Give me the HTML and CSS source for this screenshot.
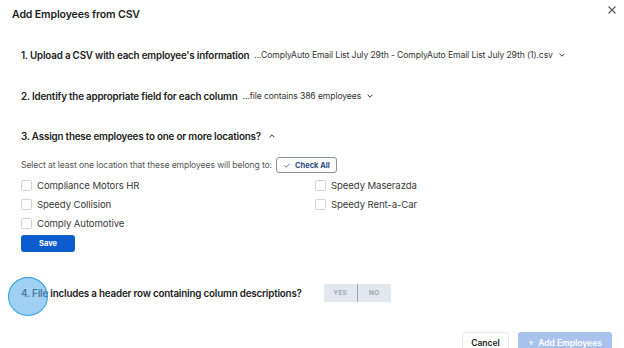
FILE: index.html
```html
<!DOCTYPE html>
<html lang="en">
<head>
<meta charset="utf-8">
<title>Add Employees from CSV</title>
<link rel="stylesheet" href="styles.css">
</head>
<body>
<div class="modal">
  <header class="modal-head">
    <h1 class="modal-title">Add Employees from CSV</h1>
    <button class="close" aria-label="Close">
      <svg width="8" height="8" viewBox="0 0 8 8"><path d="M0.5 0.5L7.5 7.5M7.5 0.5L0.5 7.5" stroke="#555" stroke-width="1.1" fill="none"/></svg>
    </button>
  </header>

  <div class="steps">
    <div class="step step-1">
      <span class="step-title">1. Upload a CSV with each employee's information</span>
      <span class="step-meta">...ComplyAuto Email List July 29th - ComplyAuto Email List July 29th (1).csv</span>
      <svg class="chev" width="6" height="4" viewBox="0 0 6 4"><path d="M0.6 0.8L3 3.2L5.4 0.8" stroke="#333" stroke-width="1" fill="none"/></svg>
    </div>

    <div class="step step-2">
      <span class="step-title">2. Identify the appropriate field for each column</span>
      <span class="step-meta">...file contains 386 employees</span>
      <svg class="chev" width="6" height="4" viewBox="0 0 6 4"><path d="M0.6 0.8L3 3.2L5.4 0.8" stroke="#333" stroke-width="1" fill="none"/></svg>
    </div>

    <section class="step-open">
      <div class="step step-3">
        <span class="step-title">3. Assign these employees to one or more locations?</span>
        <svg class="chev chev-up" width="6" height="4" viewBox="0 0 6 4"><path d="M0.6 3.2L3 0.8L5.4 3.2" stroke="#333" stroke-width="1" fill="none"/></svg>
      </div>
      <div class="select-row">
        <span class="select-label">Select at least one location that these employees will belong to:</span>
        <button class="check-all">
          <svg width="6" height="5" viewBox="0 0 6 5"><path d="M0.5 2.6L2.2 4.2L5.5 0.8" stroke="#2c4a7a" stroke-width="0.8" fill="none"/></svg>
          <span>Check All</span>
        </button>
      </div>
      <div class="locations">
        <label class="loc"><span class="box"></span>Compliance Motors HR</label>
        <label class="loc"><span class="box"></span>Speedy Maserazda</label>
        <label class="loc"><span class="box"></span>Speedy Collision</label>
        <label class="loc"><span class="box"></span>Speedy Rent-a-Car</label>
        <label class="loc"><span class="box"></span>Comply Automotive</label>
      </div>
      <button class="save">Save</button>
    </section>

    <div class="step step-4">
      <span class="step-title">4. File includes a header row containing column descriptions?</span>
      <div class="yesno">
        <button class="yn">YES</button>
        <button class="yn">NO</button>
      </div>
      <span class="spot"></span>
    </div>
  </div>

  <footer class="modal-foot">
    <button class="cancel">Cancel</button>
    <button class="add">+&nbsp;&nbsp;Add Employees</button>
  </footer>
</div>
</body>
</html>
```

FILE: styles.css
```css
* { box-sizing: border-box; }
html, body { margin: 0; padding: 0; background: #fff; }
body {
  font-family: Inter, "Noto Sans", "Liberation Sans", sans-serif;
  color: #222;
  width: 624px;
  height: 348px;
  overflow: hidden;
}
button { font-family: inherit; cursor: pointer; }

.modal { padding: 0 12px; }

.modal-head {
  height: 28px;
  display: flex;
  align-items: center;
  justify-content: space-between;
}
.modal-title {
  margin: 0;
  font-size: 10.6px;
  font-weight: 600;
  color: #1d1d1f;
  letter-spacing: -0.15px;
}
.close {
  border: 0;
  background: none;
  padding: 0;
  margin: -9px -4px 0 0;
  width: 8px;
  height: 8px;
  display: flex;
}

.steps {
  padding-left: 9px;
  display: flex;
  flex-direction: column;
  align-items: flex-start;
}
.step {
  height: 20px;
  display: flex;
  align-items: center;
  gap: 5px;
  white-space: nowrap;
}
.step-title {
  font-size: 9.8px;
  font-weight: 600;
  color: #222;
  letter-spacing: -0.18px;
}
.step-meta {
  font-size: 8.6px;
  color: #333;
  letter-spacing: -0.1px;
}
.chev { margin-left: 1px; }
.chev-up { margin-left: 3px; }

.step-1 { margin-top: 17px; }
.step-2 { margin-top: 21px; }
.step-open { margin-top: 20px; display: flex; flex-direction: column; align-items: flex-start; }

.select-row {
  margin-top: 11px;
  height: 16px;
  display: flex;
  align-items: center;
  gap: 4px;
}
.select-label {
  font-size: 8.6px;
  color: #555;
  letter-spacing: -0.1px;
}
.check-all {
  height: 16px;
  width: 61px;
  border: 1px solid #8b919b;
  border-radius: 3px;
  background: #fff;
  padding: 0 0 0 7px;
  display: flex;
  align-items: center;
  gap: 5px;
  font-size: 7.5px;
  font-weight: 700;
  color: #2c4a7a;
}

.locations {
  margin-top: 3px;
  display: grid;
  grid-template-columns: 294px 200px;
  grid-auto-rows: 19px;
}
.loc {
  display: flex;
  align-items: center;
  gap: 5px;
  font-size: 9.6px;
  color: #3a3a3a;
  letter-spacing: -0.1px;
}
.box {
  width: 11px;
  height: 11px;
  border: 1px solid #d2d2d2;
  border-radius: 1.5px;
  background: #fff;
}

.save {
  margin-top: 2px;
  width: 54px;
  height: 17px;
  border: 0;
  border-radius: 3px;
  background: #0d5ccf;
  color: #fff;
  font-size: 7.5px;
  font-weight: 700;
  padding: 0;
}

.step-4 {
  position: relative;
  margin-top: 32px;
  height: 18px;
  gap: 22px;
}
.yesno {
  display: flex;
  height: 18px;
  background: #e3e7ee;
}
.yn {
  border: 0;
  background: none;
  padding: 0;
  height: 18px;
  font-size: 6.5px;
  font-weight: 600;
  color: #9aa0a9;
  letter-spacing: 0.2px;
}
.yn:first-child { width: 34px; border-right: 1px solid #9fa6b0; }
.yn:last-child { width: 33px; }
.spot {
  position: absolute;
  left: -13px;
  top: -7px;
  width: 40px;
  height: 39px;
  border-radius: 50%;
  background: rgba(96, 178, 236, 0.6);
  border: 1.5px solid #2b9fe0;
}

.modal-foot {
  margin-top: 30px;
  display: flex;
  justify-content: flex-end;
  gap: 9px;
}
.cancel {
  width: 47px;
  height: 22px;
  border: 1px solid #e6e8ec;
  border-radius: 3px;
  background: #fff;
  font-size: 8.5px;
  font-weight: 600;
  color: #222;
  padding: 0;
}
.add {
  width: 94px;
  height: 22px;
  border: 0;
  border-radius: 3px;
  background: #a9c3ee;
  color: #fff;
  font-size: 8.5px;
  font-weight: 600;
  padding: 0;
}
```
